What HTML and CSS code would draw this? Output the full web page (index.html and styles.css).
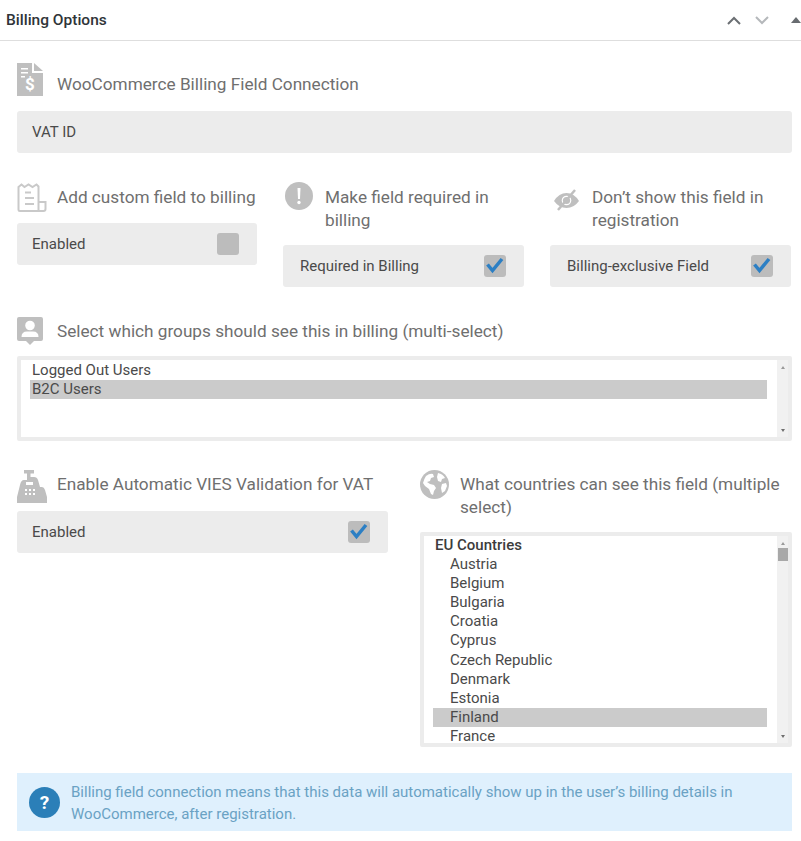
FILE: index.html
```html
<!DOCTYPE html>
<html lang="en">
<head>
<meta charset="utf-8">
<title>Billing Options</title>
<link rel="stylesheet" href="styles.css">
</head>
<body>
<header class="bar">
  <h2 class="bar-title">Billing Options</h2>
  <div class="bar-tools">
    <svg class="chev chev-up" viewBox="0 0 14 9"><path d="M1 8l6-6 6 6"/></svg>
    <svg class="chev chev-down" viewBox="0 0 14 9"><path d="M1 1l6 6 6-6"/></svg>
    <svg class="tri" viewBox="0 0 10 6"><path d="M5 0l5 6H0z"/></svg>
  </div>
</header>
<main class="content">
  <section class="field field-connection">
    <div class="head">
      <svg class="ico ico-doc" viewBox="0 0 26 33"><path class="f" d="M0 0h15v10h11v23H0z"/><path class="f" d="M17 0l9 8h-9z"/><path class="w" d="M4 5h7v1.6H4zM4 9h7v1.6H4zM4 13h4v1.6H4z"/><text class="dollar" x="13" y="27" text-anchor="middle">$</text></svg>
      <span class="label">WooCommerce Billing Field Connection</span>
    </div>
    <div class="box box-text">VAT ID</div>
  </section>

  <section class="cols3">
    <div class="field">
      <div class="head">
        <svg class="ico ico-receipt" viewBox="0 0 30 30"><path class="o" d="M1.5 4l3-2.5 3 2.500 4-2.500 4 2.500 4-2.500 2 2V28H3q-1.500 0-1.500-1.500z"/><path class="o" d="M21.500 19h7v7q0 2-2 2H21"/><path class="o" d="M8 9.500h6M8 15h9M8 21h9"/></svg>
        <span class="label">Add custom field to billing</span>
      </div>
      <div class="box box-check"><span>Enabled</span><span class="check"></span></div>
    </div>
    <div class="field">
      <div class="head">
        <svg class="ico ico-alert" viewBox="0 0 28 28"><circle class="f" cx="14" cy="14" r="14"/><path class="w" d="M12.500 6h3l-.5 11h-2z"/><circle class="w" cx="14" cy="20.500" r="1.700"/></svg>
        <span class="label">Make field required in billing</span>
      </div>
      <div class="box box-check"><span>Required in Billing</span><span class="check"><svg viewBox="0 0 22 22"><path d="M3.500 9.500l5 6L18 4"/></svg></span></div>
    </div>
    <div class="field">
      <div class="head">
        <svg class="ico ico-eye" viewBox="0 0 25 22"><path class="f" d="M0 12q5-8 12.500-8T25 12q-5 7-12.500 7T0 12z"/><circle class="w" cx="12.500" cy="11.500" r="4.800"/><circle class="f" cx="12.500" cy="11.500" r="3.600"/><path class="slash" d="M21 1L4 21"/></svg>
        <span class="label">Don’t show this field in registration</span>
      </div>
      <div class="box box-check"><span>Billing-exclusive Field</span><span class="check"><svg viewBox="0 0 22 22"><path d="M3.500 9.500l5 6L18 4"/></svg></span></div>
    </div>
  </section>

  <section class="field field-groups">
    <div class="head">
      <svg class="ico ico-user" viewBox="0 0 26 28"><path class="f" d="M2 0h22q2 0 2 2v20q0 2-2 2h-7l-4 4-4-4H2q-2 0-2-2V2q0-2 2-2z"/><circle class="w" cx="13" cy="8.500" r="4.800"/><path class="w" d="M4.500 20q0-5.500 5.500-5.500h6q5.500 0 5.500 5.500z"/></svg>
      <span class="label">Select which groups should see this in billing (multi-select)</span>
    </div>
    <div class="listbox listbox-groups">
      <div class="list">
        <div class="opt">Logged Out Users</div>
        <div class="opt opt-sel">B2C Users</div>
      </div>
      <div class="scroll"><i class="arr arr-up"></i><i class="arr arr-down"></i></div>
    </div>
  </section>

  <section class="cols2">
    <div class="field">
      <div class="head">
        <svg class="ico ico-till" viewBox="0 0 30 33"><path class="f" d="M7 0h10v3.500h-3.500V7H17q3 0 4 3l2 7h2q2 0 3 3l2 7v6H0v-6l3-12q1-5 4-5h3V3.500H7z"/><path class="w" d="M9 12h7v3H9zM8 19h2v2H8zM12 19h2v2h-2zM16 19h2v2h-2zM8 23h2v2H8zM12 23h2v2h-2zM16 23h2v2h-2z"/></svg>
        <span class="label">Enable Automatic VIES Validation for VAT</span>
      </div>
      <div class="box box-check"><span>Enabled</span><span class="check"><svg viewBox="0 0 22 22"><path d="M3.500 9.500l5 6L18 4"/></svg></span></div>
    </div>
    <div class="field">
      <div class="head">
        <svg class="ico ico-globe" viewBox="0 0 29 29"><circle class="f" cx="14.500" cy="14.500" r="14.500"/><path class="w" d="M6 6q4-3 7-2l1 3-3 1-1 3-3 1 3 2 4 1 2 3-2 3-1 4-2-1-2-5-4-3-2-3q1-4 3-7zM18 3q5 1 7 5l-3 1-1 3-3-1-1-4zM22 14l4-1 1 3-2 5-3 2-1-5z"/></svg>
        <span class="label">What countries can see this field (multiple select)</span>
      </div>
      <div class="listbox listbox-countries">
        <div class="list">
          <div class="opt opt-group">EU Countries</div>
          <div class="opt opt-child">Austria</div>
          <div class="opt opt-child">Belgium</div>
          <div class="opt opt-child">Bulgaria</div>
          <div class="opt opt-child">Croatia</div>
          <div class="opt opt-child">Cyprus</div>
          <div class="opt opt-child">Czech Republic</div>
          <div class="opt opt-child">Denmark</div>
          <div class="opt opt-child">Estonia</div>
          <div class="opt opt-child opt-sel">Finland</div>
          <div class="opt opt-child">France</div>
        </div>
        <div class="scroll"><i class="arr arr-up"></i><i class="thumb"></i><i class="arr arr-down"></i></div>
      </div>
    </div>
  </section>

  <aside class="notice">
    <span class="notice-ico">?</span>
    <p class="notice-text">Billing field connection means that this data will automatically show up in the user’s billing details in WooCommerce, after registration.</p>
  </aside>
</main>
</body>
</html>
```

FILE: styles.css
```css
* { box-sizing: border-box; }
html, body { margin: 0; padding: 0; }
body {
  width: 801px;
  height: 841px;
  overflow: hidden;
  background: #fff;
  font-family: Roboto, "Liberation Sans", sans-serif;
  color: #444;
}
.bar {
  height: 41px;
  border-bottom: 1px solid #dedede;
  display: flex;
  align-items: center;
  justify-content: space-between;
  padding-left: 6px;
}
.bar-title {
  margin: 0;
  font-size: 15.500px;
  font-weight: 500;
  color: #2f3438;
}
.bar-tools { display: flex; align-items: center; }
.chev { width: 14px; height: 9px; fill: none; stroke-width: 2; }
.chev-up { stroke: #6b6f73; }
.chev-down { stroke: #b5b8bb; margin-left: 14px; }
.tri { width: 10px; height: 6px; margin-left: 22px; fill: #686c70; }

.content { padding: 22px 9px 0 17px; }
.field { display: flex; flex-direction: column; min-width: 0; }
.head { display: flex; align-items: flex-start; }
.label {
  font-size: 17.200px;
  line-height: 23px;
  color: #6f6f6f;
}
.ico { flex: none; display: block; }
.f { fill: #bfbfbf; }
.w { fill: #fff; }
.o { fill: none; stroke: #c9c9c9; stroke-width: 2; }
.slash { stroke: #bfbfbf; stroke-width: 2.500; fill: none; }
.dollar { font: 700 17px Roboto, sans-serif; fill: #fff; }

.box {
  height: 42px;
  background: #ececec;
  border-radius: 3px;
  font-size: 15px;
  color: #4a4a4a;
  display: flex;
  align-items: center;
}
.box-text { padding-left: 15px; }
.box-check { justify-content: space-between; padding: 0 18px 0 15px; }
.cols3 .field:nth-child(n+2) .box-check { padding-left: 17px; }
.check {
  width: 22px;
  height: 22px;
  border-radius: 3px;
  background: #bcbcbc;
  display: block;
}
.check svg { display: block; width: 22px; height: 22px; fill: none; stroke: #2c7fc4; stroke-width: 3.500; }

.ico-doc { width: 26px; height: 33px; margin-right: 14px; }
.field-connection .label { margin-top: 10px; }
.field-connection .box { margin-top: 15px; }

.cols3 {
  display: grid;
  grid-template-columns: 240px 241px 241px;
  column-gap: 26px;
  margin-top: 30px;
  align-items: start;
}
.cols3 .head { min-height: 23px; margin-bottom: 13px; }
.cols3 .label { margin-top: 3px; }
.ico-receipt { width: 30px; height: 30px; margin-right: 10px; }
.cols3 .field:first-child .head { margin-bottom: 10px; }
.ico-alert { width: 28px; height: 28px; margin: -1px 12px 0 2px; }
.ico-eye { width: 25px; height: 22px; margin: 6px 13px 0 4px; }

.field-groups { margin-top: 30px; }
.ico-user { width: 26px; height: 28px; margin-right: 14px; }
.field-groups .label { margin-top: 3px; }
.field-groups .listbox { margin-top: 11px; }

.listbox {
  border: 4px solid #ececec;
  border-radius: 2px;
  display: flex;
  background: #fff;
}
.listbox-groups { height: 85px; padding-left: 9px; }
.listbox-groups .list { padding-top: 1px; }
.listbox-countries { height: 215px; margin-top: 13px; padding-left: 9px; }
.list { flex: 1; min-width: 0; }
.opt {
  height: 19.100px;
  line-height: 19.100px;
  font-size: 15px;
  color: #4a4a4a;
  padding-left: 2px;
  white-space: nowrap;
}
.opt-sel { background: #cbcbcb; }
.opt-group { font-weight: 500; color: #3c3c3c; }
.opt-child { padding-left: 17px; }
.scroll {
  flex: none;
  width: 11px;
  margin-left: 10px;
  background: #f1f1f1;
  display: flex;
  flex-direction: column;
  align-items: center;
  padding: 6px 0 5px;
}
.arr { display: block; width: 0; height: 0; border-left: 2.500px solid transparent; border-right: 2.500px solid transparent; }
.arr-up { border-bottom: 3px solid #9a9a9a; }
.arr-down { border-top: 3px solid #6e6e6e; margin-top: auto; }
.thumb { display: block; width: 10px; height: 13px; background: #a8a8a8; margin-top: 3px; }

.cols2 {
  display: grid;
  grid-template-columns: 371px 372px;
  column-gap: 32px;
  margin-top: 29px;
  align-items: start;
}
.ico-till { width: 30px; height: 33px; margin-right: 10px; }
.cols2 .label { margin-top: 3px; }
.cols2 .box { margin-top: 8px; }
.ico-globe { width: 29px; height: 29px; margin-right: 11px; }

.notice {
  margin-top: 26px;
  height: 58px;
  background: #dff0fd;
  display: flex;
  align-items: center;
  padding-left: 12px;
}
.notice-ico {
  flex: none;
  width: 31px;
  height: 31px;
  border-radius: 50%;
  background: #2b7fb8;
  color: #fff;
  font-size: 19px;
  font-weight: 700;
  line-height: 31px;
  text-align: center;
}
.notice-text {
  margin: 0 0 0 11px;
  padding-top: 1px;
  font-size: 15px;
  line-height: 22px;
  color: #6aa2c4;
}
```
